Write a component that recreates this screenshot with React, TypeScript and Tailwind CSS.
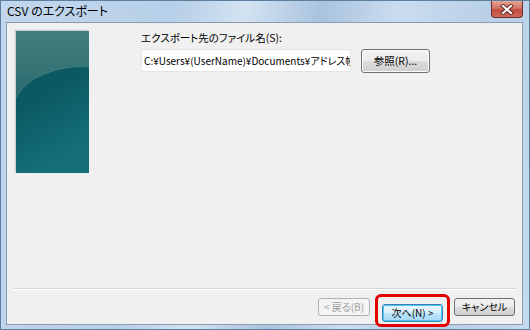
import React from "react";

function TealPanel() {
  return (
    <svg width="73" height="142" viewBox="0 0 73 142" className="block">
      <defs>
        <linearGradient id="tg" x1="0" y1="0" x2="0.3" y2="1">
          <stop offset="0" stopColor="#0c565e" />
          <stop offset="0.5" stopColor="#0b5961" />
          <stop offset="1" stopColor="#146f7b" />
        </linearGradient>
        <linearGradient id="hl" x1="0" y1="0" x2="0" y2="1">
          <stop offset="0" stopColor="#447f80" />
          <stop offset="1" stopColor="#2a6a6d" />
        </linearGradient>
      </defs>
      <rect x="0" y="0" width="73" height="142" fill="url(#tg)" />
      <path d="M0 0 H73 V36 C50 34 22 42 8 56 C4 60 2 64 0 68 Z" fill="url(#hl)" />
      <path d="M0 68 C2 64 4 60 8 56 C22 42 50 34 73 36" fill="none" stroke="#5a9393" strokeWidth="0.8" opacity="0.5" />
    </svg>
  );
}

function CloseButton() {
  return (
    <div className="w-[32px] h-[17px] rounded-b-[4px] border border-t-0 border-[#6e2b25] bg-[linear-gradient(180deg,#e3a597_0%,#d37464_45%,#c24c3f_55%,#cf6a5c_100%)] flex items-center justify-center">
      <svg width="14" height="11" viewBox="0 0 14 11">
        <path d="M3 2 L11 9 M11 2 L3 9" stroke="#5a2320" strokeWidth="4" strokeLinecap="square" />
        <path d="M3 2 L11 9 M11 2 L3 9" stroke="#ffffff" strokeWidth="2.2" strokeLinecap="square" />
      </svg>
    </div>
  );
}

export default function App() {
  const font = { fontFamily: '"Noto Sans CJK JP", "Noto Sans", sans-serif' };
  return (
    <div
      className="w-[530px] h-[330px] flex flex-col overflow-hidden border border-[#5d7f9f] bg-[linear-gradient(100deg,#c2d7ed_0%,#b7cfe8_30%,#d3e3f2_42%,#a9c2de_55%,#cadcef_68%,#b8cfe7_85%,#c6daee_100%)] [font-feature-settings:'palt']"
      style={font}
    >
      <div className="h-[21px] flex items-start">
        <div className="pl-[6px] pt-[3px] text-[12px] leading-[14px] text-black">CSV のエクスポート</div>
        <div className="ml-auto mr-[6px]">
          <CloseButton />
        </div>
      </div>
      <div className="flex-1 ml-[5px] mr-[6px] mb-[4px] border border-[#8b9bb0] bg-[#f0f0f0] flex flex-col">
        <div className="flex-1 flex pl-[8px] pt-[7px] gap-[53px]">
          <div className="w-[73px] h-[142px] border border-[#c9cdd0] shadow-[0_0_0_1px_#e4e4e4]">
            <TealPanel />
          </div>
          <div className="flex flex-col pt-[1px]">
            <div className="text-[10.5px] leading-[14px] text-black">エクスポート先のファイル名(S):</div>
            <div className="flex mt-[4px] gap-[10px]">
              <div className="w-[210px] h-[23px] bg-white border border-[#e4e4e4] overflow-hidden whitespace-nowrap text-[10px] leading-[21px] pl-[2px] text-black">
                C:¥Users¥(UserName)¥Documents¥アドレス帳.csv
              </div>
              <button className="w-[69px] h-[24px] rounded-[3px] border border-[#707070] bg-[linear-gradient(180deg,#f2f2f2_0%,#ebebeb_50%,#dddddd_50%,#cfcfcf_100%)] text-[10.5px] leading-[20px] text-black shadow-[inset_0_0_0_1px_#fcfcfc]">
                参照(R)...
              </button>
            </div>
          </div>
        </div>
        <div className="mx-[7px] h-[2px] border-t border-[#d5d5d5] border-b border-b-white" />
        <div className="h-[34px] flex items-start justify-end pt-[8px] pr-[7px]">
          <button className="w-[52px] h-[18px] rounded-[3px] border border-[#adb2b5] bg-[#f4f4f4] text-[10px] leading-[16px] text-[#a0a0a0] whitespace-pre">
            {"< 戻る(B)"}
          </button>
          <div className="relative ml-[12px]">
            <div className="absolute left-[-7px] right-[-7px] top-[-4px] bottom-[-5px] border-[3px] border-[#e40000] rounded-[6px]" />
            <button className="relative w-[61px] h-[18px] rounded-[3px] border border-[#3c7fb1] bg-[linear-gradient(180deg,#eaf6fd_0%,#d9f0fc_50%,#bee6fd_50%,#a7d9f5_100%)] text-[10px] leading-[16px] text-black shadow-[inset_0_0_0_1px_#48c6f5]">
              次へ(N) &gt;
            </button>
          </div>
          <button className="ml-[11px] w-[61px] h-[18px] rounded-[3px] border border-[#707070] bg-[linear-gradient(180deg,#f2f2f2_0%,#ebebeb_50%,#dddddd_50%,#cfcfcf_100%)] text-[10px] leading-[16px] text-black">
            キャンセル
          </button>
        </div>
      </div>
    </div>
  );
}
